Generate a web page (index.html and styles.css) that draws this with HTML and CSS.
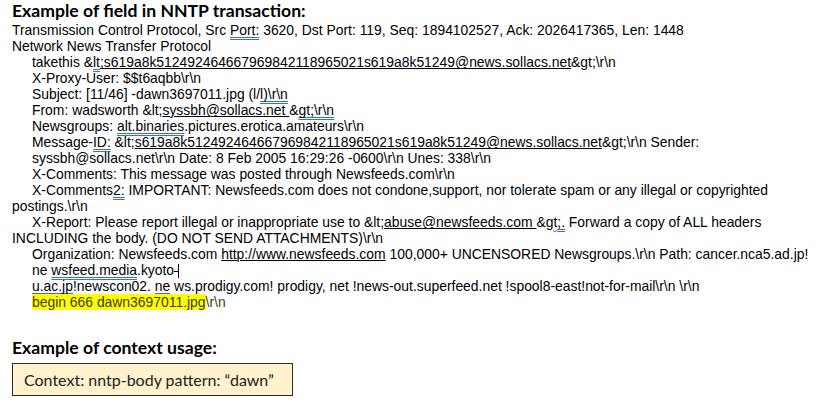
FILE: index.html
```
<!DOCTYPE html>
<html>
<head>
<meta charset="utf-8">
<link rel="stylesheet" href="styles.css">
</head>
<body>
<h2 class="heading">Example of field in NNTP transaction:</h2>
<div class="trace">
  <div class="ln">Transmission Control Protocol, Src <span class="gr">Port:</span> 3620, Dst Port: 119, Seq: 1894102527, Ack: 2026417365, Len: 1448</div>
  <div class="ln">Network News Transfer Protocol</div>
  <div class="ln in">takethis &amp;<span class="gr">lt</span><span class="ul">;s619a8k512492464667969842118965021s619a8k51249@news.sollacs.net</span>&amp;gt;\r\n</div>
  <div class="ln in">X-Proxy-User: $$t6aqbb\r\n</div>
  <div class="ln in">Subject: [11/46] -dawn3697011.jpg (l/<span class="gr">l)\r\n</span></div>
  <div class="ln in">From: wadsworth &amp;lt;<span class="ul">syssbh@sollacs.net </span>&amp;<span class="gr">gt;\r\n</span></div>
  <div class="ln in">Newsgroups: <span class="gr">alt.binaries</span>.pictures.erotica.amateurs\r\n</div>
  <div class="ln in">Message-<span class="gr">ID:</span> &amp;lt;<span class="ul">s619a8k512492464667969842118965021s619a8k51249@news.sollacs.net</span>&amp;gt;\r\n Sender:</div>
  <div class="ln in">syssbh@sollacs.net\r\n Date: 8 Feb 2005 16:29:26 -0600\r\n Unes: 338\r\n</div>
  <div class="ln in">X-Comments: This message was posted through Newsfeeds.com\r\n</div>
  <div class="ln in">X-Comments<span class="gr">2:</span> IMPORTANT: Newsfeeds.com does not condone,support, nor tolerate spam or any illegal or copyrighted</div>
  <div class="ln">postings.\r\n</div>
  <div class="ln in">X-Report: Please report illegal or inappropriate use to &amp;lt;<span class="ul">abuse@newsfeeds.com </span>&amp;<span class="sp">gt</span><span class="gr">;.</span> Forward a copy of ALL headers</div>
  <div class="ln">INCLUDING the body. (DO NOT SEND ATTACHMENTS)\r\n</div>
  <div class="ln in">Organization: Newsfeeds.com <span class="ul">http://www.newsfeeds.com</span> 100,000+ UNCENSORED Newsgroups.\r\n Path: cancer.nca5.ad.jp!</div>
  <div class="ln in">ne <span class="gr">wsfeed.media</span>.kyoto<span class="caret"></span></div>
  <div class="ln in"><span class="gr">u.ac.jp</span>!newscon02. <span class="gr">ne</span> ws.prodigy.com! prodigy, net !news-out.superfeed.net !spool8-east!not-for-mail\r\n \r\n</div>
  <div class="ln in olive"><span class="hl">begin 666 dawn3697011.jpg</span>\r\n</div>
</div>
<h2 class="heading second">Example of context usage:</h2>
<div class="context">Context: nntp-body pattern: “dawn”</div>
</body>
</html>
```
FILE: styles.css
```
html, body {
  margin: 0;
  padding: 0;
  background: #ffffff;
}
body {
  padding-left: 12px;
  color: #000;
}
.heading {
  margin: 0 0 1.4px 0;
  font-family: "Lato", "Open Sans", sans-serif;
  font-weight: 700;
  font-size: 17.6px;
  line-height: 21px;
  color: #000;
}
.trace {
  font-family: "Liberation Sans", Arial, sans-serif;
  font-size: 13.9px;
  line-height: 16px;
}
.ln {
  white-space: nowrap;
}
.in {
  padding-left: 20px;
}
.gr {
  text-decoration: underline double #3b6fd6;
  text-decoration-thickness: 1px;
  text-underline-offset: 2px;
}
.ul {
  text-decoration: underline #000;
  text-decoration-thickness: 1px;
}
.sp {
  text-decoration: underline wavy #e02020;
  text-decoration-thickness: 1px;
}
.caret {
  display: inline-block;
  width: 4px;
  height: 14px;
  vertical-align: -3px;
  border-right: 1px solid #000;
  background: linear-gradient(#000, #000) left 7px / 4px 1px no-repeat;
}
.olive {
  color: #3d3d16;
}
.hl {
  background: #ffff00;
}
.second {
  margin-top: 27px;
  margin-bottom: 4.6px;
}
.context {
  width: 268px;
  height: 31px;
  border: 1.5px solid #2b2b2b;
  background: #fff2cc;
  padding-left: 11px;
  font-family: "Lato", "Open Sans", sans-serif;
  font-size: 16px;
  line-height: 31px;
  color: #222;
}
```
